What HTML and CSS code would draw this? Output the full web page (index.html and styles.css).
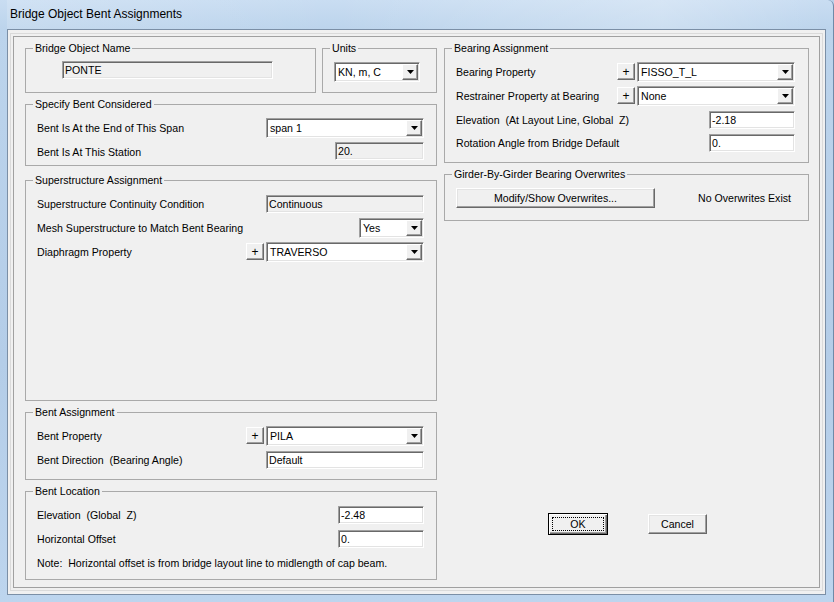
FILE: index.html
```html
<!DOCTYPE html>
<html>
<head>
<meta charset="utf-8">
<title>Bridge Object Bent Assignments</title>
<link rel="stylesheet" href="styles.css">
</head>
<body>
<div class="window">
  <div class="titlebar"><span class="title">Bridge Object Bent Assignments</span></div>
  <div class="client">
    <div class="outer-panel">
      <div class="panel">
        <div class="col-left">
          <div class="row-top">
            <fieldset class="group g-name">
              <legend>Bridge Object Name</legend>
              <div class="gbody body-name">
                <div class="textbox disabled w-name">PONTE</div>
              </div>
            </fieldset>
            <fieldset class="group g-units">
              <legend>Units</legend>
              <div class="gbody body-units">
                <div class="combo w-units"><span class="combo-text">KN, m, C</span><span class="combo-btn"><svg width="7" height="4" viewBox="0 0 7 4"><polygon points="0,0 7,0 3.5,4" fill="#000"/></svg></span></div>
              </div>
            </fieldset>
          </div>

          <fieldset class="group g-span">
            <legend>Specify Bent Considered</legend>
            <div class="gbody">
              <div class="row">
                <span class="lbl">Bent Is At the End of This Span</span>
                <div class="ctrls"><div class="combo w-158"><span class="combo-text">span 1</span><span class="combo-btn"><svg width="7" height="4" viewBox="0 0 7 4"><polygon points="0,0 7,0 3.5,4" fill="#000"/></svg></span></div></div>
              </div>
              <div class="row">
                <span class="lbl">Bent Is At This Station</span>
                <div class="ctrls"><div class="textbox disabled w-89 up2">20.</div></div>
              </div>
            </div>
          </fieldset>

          <fieldset class="group g-super">
            <legend>Superstructure Assignment</legend>
            <div class="gbody">
              <div class="row">
                <span class="lbl">Superstructure Continuity Condition</span>
                <div class="ctrls"><div class="textbox disabled w-158">Continuous</div></div>
              </div>
              <div class="row">
                <span class="lbl">Mesh Superstructure to Match Bent Bearing</span>
                <div class="ctrls"><div class="combo w-65"><span class="combo-text">Yes</span><span class="combo-btn"><svg width="7" height="4" viewBox="0 0 7 4"><polygon points="0,0 7,0 3.5,4" fill="#000"/></svg></span></div></div>
              </div>
              <div class="row">
                <span class="lbl">Diaphragm Property</span>
                <div class="ctrls"><div class="plus">+</div><div class="combo w-158"><span class="combo-text">TRAVERSO</span><span class="combo-btn"><svg width="7" height="4" viewBox="0 0 7 4"><polygon points="0,0 7,0 3.5,4" fill="#000"/></svg></span></div></div>
              </div>
            </div>
          </fieldset>

          <fieldset class="group g-bent">
            <legend>Bent Assignment</legend>
            <div class="gbody">
              <div class="row">
                <span class="lbl">Bent Property</span>
                <div class="ctrls"><div class="plus">+</div><div class="combo w-158"><span class="combo-text">PILA</span><span class="combo-btn"><svg width="7" height="4" viewBox="0 0 7 4"><polygon points="0,0 7,0 3.5,4" fill="#000"/></svg></span></div></div>
              </div>
              <div class="row row-23">
                <span class="lbl">Bent Direction&nbsp; (Bearing Angle)</span>
                <div class="ctrls"><div class="textbox w-158">Default</div></div>
              </div>
            </div>
          </fieldset>

          <fieldset class="group g-loc">
            <legend>Bent Location</legend>
            <div class="gbody">
              <div class="row">
                <span class="lbl">Elevation&nbsp; (Global&nbsp; Z)</span>
                <div class="ctrls"><div class="textbox w-86">-2.48</div></div>
              </div>
              <div class="row row-23">
                <span class="lbl">Horizontal Offset</span>
                <div class="ctrls"><div class="textbox w-86">0.</div></div>
              </div>
              <div class="row row-25">
                <span class="lbl">Note:&nbsp; Horizontal offset is from bridge layout line to midlength of cap beam.</span>
              </div>
            </div>
          </fieldset>
        </div>

        <div class="col-right">
          <fieldset class="group g-bearing">
            <legend>Bearing Assignment</legend>
            <div class="gbody body-right">
              <div class="row">
                <span class="lbl">Bearing Property</span>
                <div class="ctrls"><div class="plus">+</div><div class="combo w-158"><span class="combo-text">FISSO_T_L</span><span class="combo-btn"><svg width="7" height="4" viewBox="0 0 7 4"><polygon points="0,0 7,0 3.5,4" fill="#000"/></svg></span></div></div>
              </div>
              <div class="row">
                <span class="lbl">Restrainer Property at Bearing</span>
                <div class="ctrls"><div class="plus">+</div><div class="combo w-158"><span class="combo-text">None</span><span class="combo-btn"><svg width="7" height="4" viewBox="0 0 7 4"><polygon points="0,0 7,0 3.5,4" fill="#000"/></svg></span></div></div>
              </div>
              <div class="row row-23">
                <span class="lbl">Elevation&nbsp; (At Layout Line, Global&nbsp; Z)</span>
                <div class="ctrls"><div class="textbox w-86">-2.18</div></div>
              </div>
              <div class="row">
                <span class="lbl">Rotation Angle from Bridge Default</span>
                <div class="ctrls"><div class="textbox w-86">0.</div></div>
              </div>
            </div>
          </fieldset>

          <fieldset class="group g-girder">
            <legend>Girder-By-Girder Bearing Overwrites</legend>
            <div class="gbody body-girder">
              <div class="btn btn-modify">Modify/Show Overwrites...</div>
              <span class="status">No Overwrites Exist</span>
            </div>
          </fieldset>

          <div class="actions">
            <div class="btn btn-ok default"><span class="focus">OK</span></div>
            <div class="btn btn-cancel">Cancel</div>
          </div>
        </div>
      </div>
    </div>
  </div>
</div>
</body>
</html>
```

FILE: styles.css
```css
html, body {
  margin: 0;
  padding: 0;
}
body {
  width: 834px;
  height: 602px;
  overflow: hidden;
  font-family: "Liberation Sans", Arial, sans-serif;
  font-size: 10.6px;
  color: #000;
  background: #b9d1ea;
}
.window {
  width: 834px;
  height: 602px;
  box-sizing: border-box;
  padding: 0 7px 7px 7px;
  display: flex;
  flex-direction: column;
  background: linear-gradient(180deg, #c9ddf2 0px, #bcd4ec 29px, #b4cde8 60%, #bdd5ee 100%);
  border-right: 1px solid #6f8aa8;
  border-radius: 0 6px 0 0;
}
.titlebar {
  height: 29px;
  flex: none;
  display: flex;
  align-items: center;
  padding-left: 3px;
  padding-bottom: 2px;
  box-sizing: border-box;
  font-size: 12px;
  background: linear-gradient(90deg, rgba(255,255,255,0.15), rgba(255,255,255,0) 40%, rgba(255,255,255,0.25) 80%, rgba(255,255,255,0));
}
.title {
  color: #000;
}
.client {
  flex: 1;
  border: 1px solid #7b8fa6;
  background: #f0f0f0;
  padding: 3px 3px 3px 2px;
  display: flex;
}
.outer-panel {
  flex: 1;
  border: 1px solid #dadada;
  padding: 2px;
  display: flex;
}
.panel {
  flex: 1;
  border: 1px solid #a0a0a0;
  display: flex;
  gap: 7px;
  padding: 5px 10px 0 11px;
}
.col-left {
  width: 412px;
  display: flex;
  flex-direction: column;
}
.col-right {
  width: 365px;
  display: flex;
  flex-direction: column;
}
.row-top {
  display: flex;
  gap: 6px;
}

/* group boxes */
.group {
  margin: 0;
  padding: 0;
  min-width: 0;
  box-sizing: border-box;
  border: 1px solid #a9a9a9;
  border-radius: 0;
}
.group legend {
  margin-left: 7px;
  padding: 0 2px;
  font-size: 10.6px;
  line-height: 13px;
  height: 13px;
}
.gbody {
  padding: 5px 12px 0 11px;
}
.g-name { width: 291px; height: 51px; }
.g-units { width: 115px; height: 51px; }
.g-span { height: 68px; margin-top: 5px; }
.g-super { height: 227px; margin-top: 8px; }
.g-bent { height: 74px; margin-top: 5px; }
.g-loc { height: 95px; margin-top: 5px; }
.g-bearing { height: 121px; }
.g-girder { height: 53px; margin-top: 5px; }

.body-name { padding: 6px 0 0 36px; }
.body-units { padding: 7px 0 0 11px; }
.body-right { padding: 5px 13px 0 11px; }
.body-girder {
  padding: 7px 17px 0 11px;
  display: flex;
  align-items: center;
}

.row {
  height: 24px;
  display: flex;
  align-items: center;
}
.row-23 { height: 23px; }
.row-25 { height: 25px; }
.lbl {
  white-space: nowrap;
}
.ctrls {
  margin-left: auto;
  display: flex;
  align-items: center;
  gap: 2px;
}

/* controls */
.textbox, .combo {
  box-sizing: border-box;
  border: 1px solid;
  border-color: #a0a0a0 #ffffff #ffffff #a0a0a0;
  box-shadow: inset 1px 1px 0 #696969, inset -1px -1px 0 #e3e3e3;
  background: #fff;
  white-space: nowrap;
}
.textbox {
  height: 18px;
  line-height: 16px;
  padding-left: 2px;
}
.textbox.disabled {
  background: #f0f0f0;
}
.up2 {
  margin-bottom: 3px;
}
.combo {
  height: 20px;
  display: flex;
  align-items: center;
  padding: 1px;
}
.combo-text {
  flex: 1;
  padding-left: 2px;
}
.combo-btn {
  width: 16px;
  height: 16px;
  box-sizing: border-box;
  display: flex;
  align-items: center;
  justify-content: center;
  background: #f0f0f0;
  border: 1px solid;
  border-color: #ffffff #696969 #696969 #ffffff;
  box-shadow: inset -1px -1px 0 #a0a0a0;
}
.combo-btn svg {
  display: block;
}
.plus {
  width: 18px;
  height: 17px;
  box-sizing: border-box;
  display: flex;
  align-items: center;
  justify-content: center;
  background: #f0f0f0;
  border: 1px solid;
  border-color: #ffffff #696969 #696969 #ffffff;
  box-shadow: inset -1px -1px 0 #a0a0a0;
  font-size: 12px;
  line-height: 12px;
  align-self: flex-start;
  margin-top: 1px;
}
.w-name { width: 211px; }
.w-units { width: 86px; }
.w-158 { width: 158px; }
.w-89 { width: 89px; }
.w-86 { width: 86px; }
.w-65 { width: 65px; }

.btn {
  box-sizing: border-box;
  display: flex;
  align-items: center;
  justify-content: center;
  background: #f0f0f0;
  border: 1px solid;
  border-color: #ffffff #696969 #696969 #ffffff;
  box-shadow: inset -1px -1px 0 #a0a0a0, inset 1px 1px 0 #e3e3e3;
  white-space: nowrap;
}
.btn-modify {
  width: 199px;
  height: 20px;
}
.status {
  margin-left: auto;
}
.actions {
  margin-top: auto;
  margin-bottom: 52px;
  display: flex;
  justify-content: center;
  align-items: center;
  gap: 40px;
  padding-left: 2px;
}
.btn-ok {
  width: 60px;
  height: 22px;
}
.btn.default {
  border: 1px solid #000;
  box-shadow: inset 1px 1px 0 #ffffff, inset -1px -1px 0 #696969, inset -2px -2px 0 #a0a0a0;
  padding: 3px;
}
.focus {
  flex: 1;
  align-self: stretch;
  display: flex;
  align-items: center;
  justify-content: center;
  border: 1px dotted #000;
}
.btn-cancel {
  width: 59px;
  height: 20px;
}
```
